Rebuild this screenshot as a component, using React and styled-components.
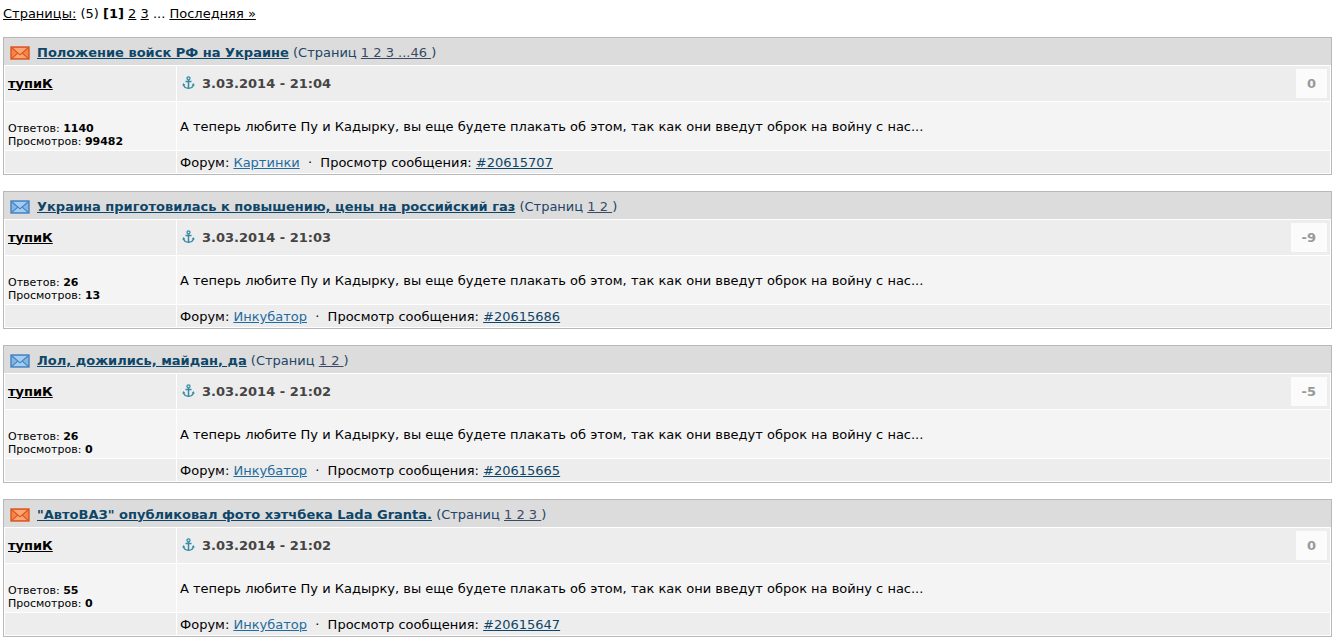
import React from "react";
import styled, { createGlobalStyle } from "styled-components";

const GlobalStyle = createGlobalStyle`
  body {
    margin: 0;
    background: #fff;
    color: #000;
    font-family: Verdana, "DejaVu Sans", sans-serif;
    font-size: 13px;
    line-height: 16px;
  }
`;

const Page = styled.main`
  padding: 6px 9px 6px 3px;
`;

const Pager = styled.nav`
  margin-bottom: 15px;
  white-space: pre;

  a {
    color: #000;
  }
`;

const Topics = styled.div`
  display: flex;
  flex-direction: column;
  gap: 16px;
`;

const Topic = styled.section`
  border: 1px solid #b8b8b8;
`;

const Title = styled.header`
  display: flex;
  align-items: center;
  height: 27px;
  padding: 2px 6px 0;
  box-sizing: border-box;
  background: #dcdcdc;
  color: #224466;
  white-space: pre;

  svg {
    margin-right: 7px;
  }
`;

const TitleLink = styled.a`
  color: #0d4668;
  font-weight: bold;
`;

const PageLink = styled.a`
  color: #3c4a66;
`;

const Post = styled.table`
  width: 100%;
  table-layout: fixed;
  border-collapse: separate;
  border-spacing: 1px;
`;

const Cell = styled.td`
  height: ${(p) => p.$height}px;
  box-sizing: border-box;
  padding: 0 3px;
  background: ${(p) => (p.$light ? "#f4f4f4" : "#ededed")};
  vertical-align: middle;
`;

const SideCol = styled.col`
  width: 171px;
`;

const Author = styled.a`
  color: #000;
  font-weight: bold;
`;

const PostHead = styled.div`
  display: flex;
  align-items: center;
  color: #444;
  font-weight: bold;

  svg {
    margin: 0 7px 2px 2px;
  }
`;

const Score = styled.span`
  margin-left: auto;
  padding: 7px 11px 6px;
  background: #fbfbfb;
  color: #999;
`;

const Stats = styled.div`
  padding-top: 18px;
  font-size: 11px;
  line-height: 13px;
`;

const Message = styled.p`
  margin: 0;
  padding-top: 2px;
`;

const Source = styled.div`
  padding-top: 2px;
  white-space: pre;
`;

const ForumLink = styled.a`
  color: #1f6ba0;
`;

const PostLink = styled.a`
  color: #0d4668;
`;

const palette = {
  hot: { edge: "#d9531e", fill: "#f9844a", flap: "#fca673" },
  normal: { edge: "#4580bd", fill: "#80b5e8", flap: "#a3cdf3" },
};

function Envelope({ kind }) {
  const { edge, fill, flap } = palette[kind];
  return (
    <svg width="20" height="14" viewBox="0 0 20 14" aria-hidden="true">
      <rect x="1" y="1" width="18" height="12" fill={fill} stroke={edge} strokeWidth="1.4" />
      <path d="M2.5 12 8 7.2l2 1.6 2-1.6 5.5 4.8z" fill={flap} />
      <path d="M2.5 2h15L10 8.6z" fill={flap} />
      <path d="M2 2l8 6.8L18 2M2 12.2l5.8-5M18 12.2l-5.8-5" fill="none" stroke={edge} strokeWidth="1.1" />
    </svg>
  );
}

function Anchor() {
  return (
    <svg width="13" height="14" viewBox="0 0 13 14" fill="none" stroke="#358aa5" aria-hidden="true">
      <circle cx="6.5" cy="2.3" r="1.5" strokeWidth="1.3" />
      <path d="M6.5 4v8.5M3.5 5.5h6" strokeWidth="1.5" />
      <path d="M1.5 8.3c.3 2.8 2.2 4 5 4s4.7-1.2 5-4" strokeWidth="1.4" />
      <path d="M.3 9.8 1.4 7l2 2.2zM12.7 9.8 11.6 7l-2 2.2z" fill="#358aa5" stroke="none" />
    </svg>
  );
}

const topics = [
  {
    kind: "hot",
    title: "Положение войск РФ на Украине",
    pages: "1 2 3 ...46 ",
    time: "21:04",
    score: "0",
    replies: 1140,
    views: 99482,
    forum: "Картинки",
    id: 20615707,
  },
  {
    kind: "normal",
    title: "Украина приготовилась к повышению, цены на российский газ",
    pages: "1 2 ",
    time: "21:03",
    score: "-9",
    replies: 26,
    views: 13,
    forum: "Инкубатор",
    id: 20615686,
  },
  {
    kind: "normal",
    title: "Лол, дожились, майдан, да",
    pages: "1 2 ",
    time: "21:02",
    score: "-5",
    replies: 26,
    views: 0,
    forum: "Инкубатор",
    id: 20615665,
  },
  {
    kind: "hot",
    title: '"АвтоВАЗ" опубликовал фото хэтчбека Lada Granta.',
    pages: "1 2 3 ",
    time: "21:02",
    score: "0",
    replies: 55,
    views: 0,
    forum: "Инкубатор",
    id: 20615647,
  },
];

function TopicCard({ topic }) {
  return (
    <Topic>
      <Title>
        <Envelope kind={topic.kind} />
        <TitleLink href="#">{topic.title}</TitleLink>
        {" (Страниц "}
        <PageLink href="#">{topic.pages}</PageLink>)
      </Title>
      <Post>
        <colgroup>
          <SideCol />
          <col />
        </colgroup>
        <tbody>
          <tr>
            <Cell $height={35}>
              <Author href="#">тупиК</Author>
            </Cell>
            <Cell $height={35}>
              <PostHead>
                <Anchor />
                3.03.2014 - {topic.time}
                <Score>{topic.score}</Score>
              </PostHead>
            </Cell>
          </tr>
          <tr>
            <Cell $height={48} $light>
              <Stats>
                Ответов: <b>{topic.replies}</b>
                <br />
                Просмотров: <b>{topic.views}</b>
              </Stats>
            </Cell>
            <Cell $height={48} $light>
              <Message>
                А теперь любите Пу и Кадырку, вы еще будете плакать об этом, так как они введут оброк на войну с нас...
              </Message>
            </Cell>
          </tr>
          <tr>
            <Cell $height={22} />
            <Cell $height={22}>
              <Source>
                Форум: <ForumLink href="#">{topic.forum}</ForumLink>
                {"\u00a0 ·\u00a0 Просмотр сообщения: "}
                <PostLink href="#">#{topic.id}</PostLink>
              </Source>
            </Cell>
          </tr>
        </tbody>
      </Post>
    </Topic>
  );
}

function App() {
  return (
    <Page>
      <GlobalStyle />
      <Pager>
        <a href="#">Страницы:</a> (5) <b>[1]</b> <a href="#">2</a> <a href="#">3</a> ...{" "}
        <a href="#">Последняя »</a>
      </Pager>
      <Topics>
        {topics.map((topic) => (
          <TopicCard key={topic.id} topic={topic} />
        ))}
      </Topics>
    </Page>
  );
}

export default App;
